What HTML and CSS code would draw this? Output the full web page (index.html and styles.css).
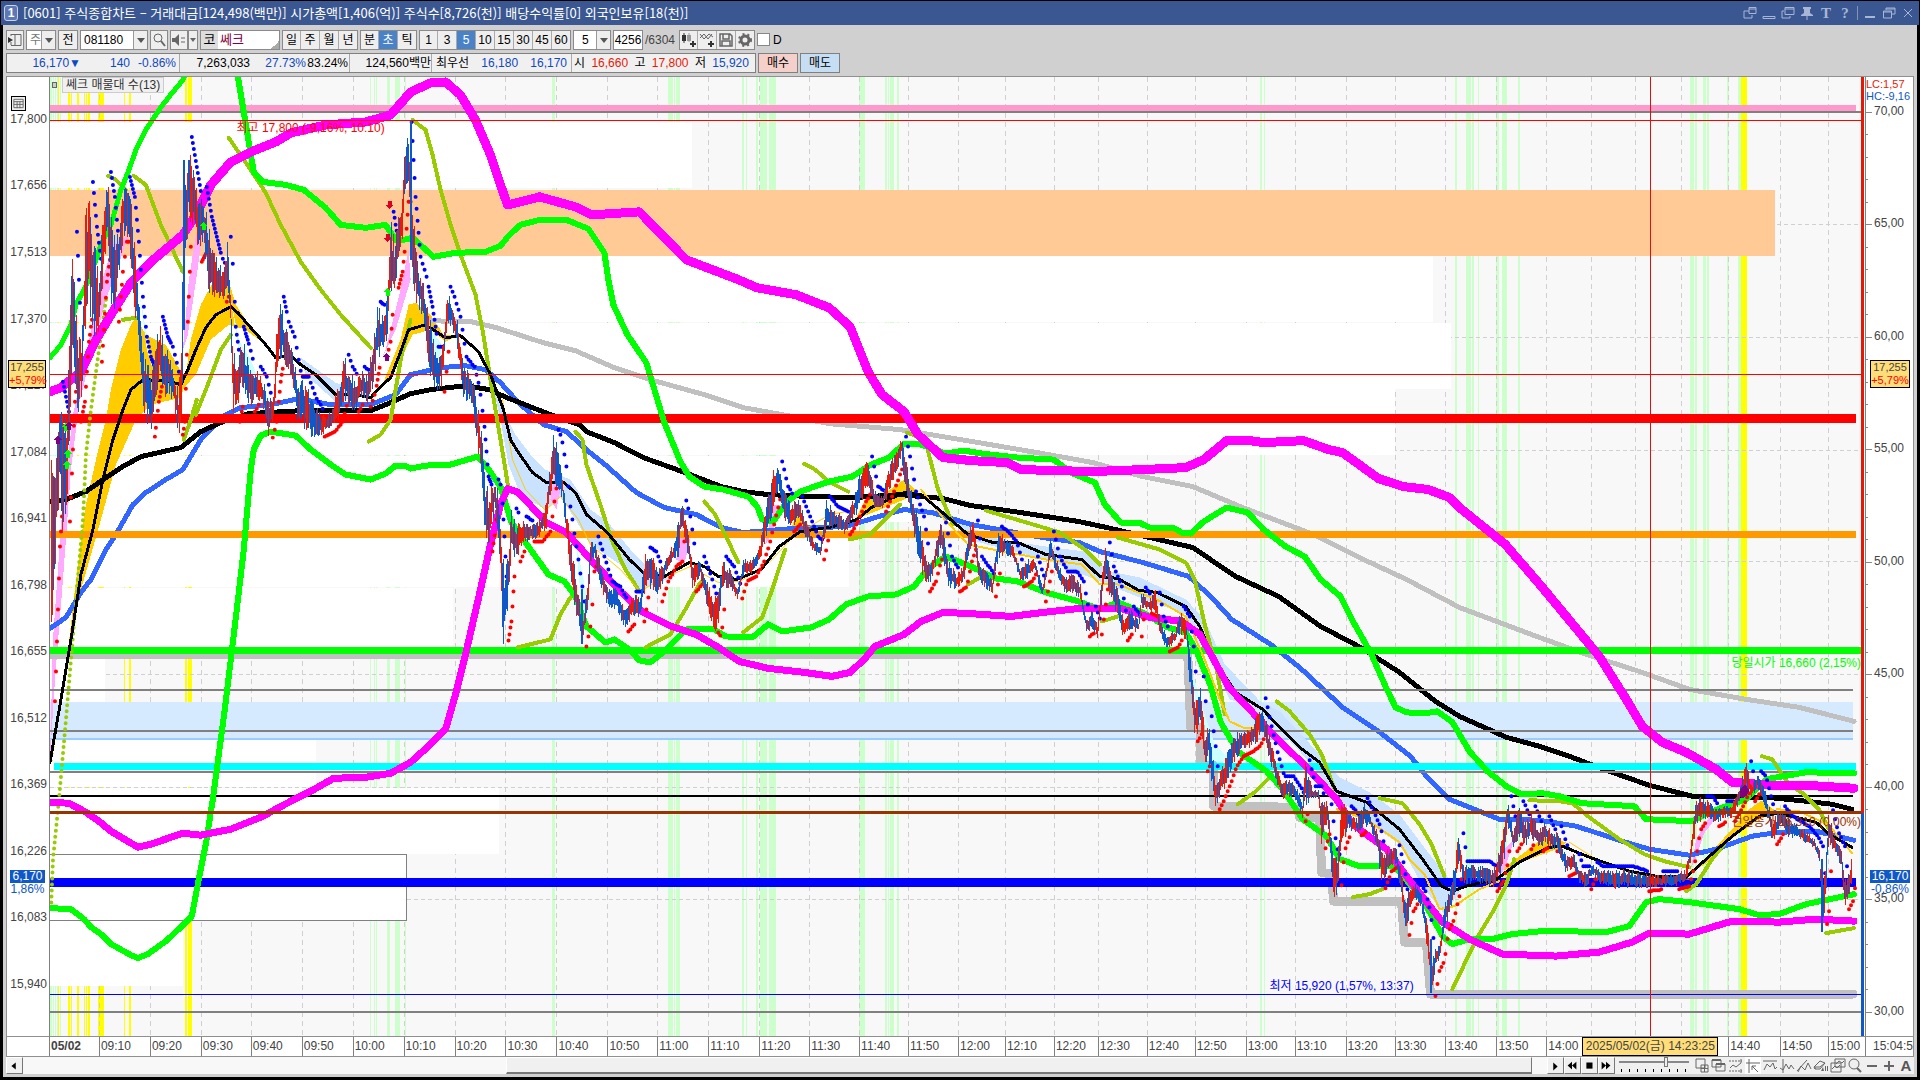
FILE: index.html
```html
<!DOCTYPE html>
<html lang="ko">
<head>
<meta charset="utf-8">
<title>[0601] 주식종합차트</title>
<link rel="stylesheet" href="styles.css">
</head>
<body>
<header class="titlebar">
  <span class="badge">1</span>
  <h1>[0601] 주식종합차트 – 거래대금[124,498(백만)] 시가총액[1,406(억)] 주식수[8,726(천)] 배당수익률[0] 외국인보유[18(천)]</h1>
  <nav class="wincontrols">
    <button aria-label="분리"><svg viewBox="0 0 14 14"><path d="M6 5H1v7h8V9M6 1.500h7v6H6zM6 3h7"/></svg></button>
    <button aria-label="내리기"><svg viewBox="0 0 14 14"><path d="M1 10.500h12v2H1z"/></svg></button>
    <button aria-label="복제"><svg viewBox="0 0 14 14"><path d="M4 1.500h9v7H4zM4 3h9M1 5v7h8M1 5h2M9 12v-2"/></svg></button>
    <button aria-label="고정"><svg viewBox="0 0 14 14"><path class="solid" d="M3 1h8v2h-1v4l3 2v1H1V9l3-2V3H3z"/><path d="M7 10v4"/></svg></button>
    <button class="letter" aria-label="글꼴">T</button>
    <button class="letter" aria-label="도움말">?</button>
    <i></i>
    <button aria-label="최소화"><svg viewBox="0 0 14 14"><path class="solid" d="M2 10h10v2H2z"/></svg></button>
    <button aria-label="이전 크기"><svg viewBox="0 0 14 14"><path d="M4 4V2h9v6h-3M4 3h9M1.500 5h8v7h-8zM1.500 6h8"/></svg></button>
    <button aria-label="닫기"><svg viewBox="0 0 14 14"><path d="M3 3l8 8M11 3l-8 8"/></svg></button>
  </nav>
</header>
<main class="window">
  <form class="toolbar">
    <button type="button" class="cell" aria-label="패널"><svg viewBox="0 0 16 16"><path d="M4 2.500h10v11H4M8 3v10M4 13V10M4 2v2"/><path class="dark" d="M1 5l5 3-5 3z"/></svg></button>
    <label class="drop w30"><select aria-label="종류"><option>주</option></select></label>
    <button type="button" class="cell w20">전</button>
    <label class="drop w68"><input aria-label="종목코드" value="081180"></label>
    <button type="button" class="cell" aria-label="검색"><svg viewBox="0 0 16 16"><circle cx="7" cy="6" r="4"/><path d="M10 9l4 5" stroke-width="2"/></svg></button>
    <button type="button" class="cell" aria-label="소리"><svg viewBox="0 0 16 16"><path class="fill" d="M1 6h3l4-4v12L4 10H1z"/><path d="M11 5v2M11 9v2M13 5v2M13 9v2"/></svg></button>
    <button type="button" class="cell w10" aria-label="소리 목록"><svg viewBox="0 0 8 16"><path class="fill" d="M1 6h6L4 10z"/></svg></button>
    <div class="stock"><b>코</b><span>쎄크</span></div>
    <div class="group">
      <button type="button">일</button><button type="button">주</button><button type="button">월</button><button type="button">년</button>
    </div>
    <div class="group">
      <button type="button">분</button><button type="button" class="on">초</button><button type="button">틱</button>
    </div>
    <div class="group">
      <button type="button">1</button><button type="button">3</button><button type="button" class="on">5</button><button type="button">10</button><button type="button">15</button><button type="button">30</button><button type="button">45</button><button type="button">60</button>
    </div>
    <label class="drop w38"><select aria-label="주기"><option>5</option></select></label>
    <input class="count" aria-label="표시 개수" value="4256"><span class="total">/6304</span>
    <div class="group tools">
      <button type="button" aria-label="봉 추가"><svg viewBox="0 0 16 16"><path class="dark" d="M1 3h4v6H1zM2.500 1h1v10h-1z"/><path class="soft" d="M6 3h4v6H6zM7.500 1h1v9h-1z"/><path class="dark" d="M11 9h2v2h2v2h-2v2h-2v-2H9v-2h2z"/></svg></button>
      <button type="button" aria-label="지표 추가"><svg viewBox="0 0 16 16"><path d="M1 6l4-4 4 5 4-5M1 2l4 5 5-5 4 3"/><path class="dark" d="M11 9h2v2h2v2h-2v2h-2v-2H9v-2h2z"/></svg></button>
      <button type="button" aria-label="저장"><svg viewBox="0 0 16 16"><path d="M2 2h10l2 2v10H2zM5 2v5h6V2M4 14V9h8v5" stroke-width="1.500"/></svg></button>
      <button type="button" aria-label="설정"><svg viewBox="0 0 16 16"><circle cx="8" cy="8" r="4" stroke-width="3"/><circle cx="8" cy="8" r="6" stroke-dasharray="2 3" stroke-width="2"/></svg></button>
    </div>
    <label class="check"><input type="checkbox">D</label>
  </form>
  <section class="quote">
    <dl>
      <div class="q1"><span class="down a">16,170▼</span><span class="down b">140</span><span class="down c">-0.86%</span></div>
      <div class="q2"><span class="d">7,263,033</span><span class="down e">27.73%</span><span class="f">83.24%</span></div>
      <div class="q3">124,560백만</div>
      <div class="q4"><span>최우선</span><span class="down">16,180</span><span class="down">16,170</span></div>
      <div class="q5"><span>시</span><span class="up">16,660</span><span>고</span><span class="up">17,800</span><span>저</span><span class="down">15,920</span></div>
    </dl>
    <button class="buy">매수</button>
    <button class="sell">매도</button>
  </section>
  <section class="chart">
    <div class="axis left" id="left">
      <button class="grid-btn" aria-label="표"><svg viewBox="0 0 14 14"><path d="M2 2.500h10v9H2zM2 5h10M2 8h10M5.500 5v7M8.500 5v7"/></svg></button>
    </div>
    <div class="plot">
      <svg id="canvas" viewBox="49 77 1813 960" preserveAspectRatio="none" role="img" aria-label="쎄크 5초 차트"></svg>
      <div class="legend"><i></i><span>쎄크 매물대 수(13)</span></div>
      <span class="note high">최고 17,800 (-9,16%, 10:10)</span>
      <span class="note low">최저 15,920 (1,57%, 13:37)</span>
      <span class="note open">당일시가 16,660 (2,15%)</span>
      <span class="note prev">전일종가 16,310 (0,00%)</span>
    </div>
    <div class="range"></div>
    <div class="axis right" id="right">
      <span class="lc">LC:1,57</span><span class="hc">HC:-9,16</span>
    </div>
    <div class="corner"></div>
    <div class="times" id="times"></div>
    <div class="last">15:04:5</div>
  </section>
  <footer class="bottom">
    <button class="step" aria-label="왼쪽"><svg viewBox="0 0 16 16"><path class="ink" d="M10 4v8L5 8z"/></svg></button>
    <div class="track"><div class="thumb"></div></div>
    <div class="player">
      <button aria-label="재생"><svg viewBox="0 0 16 16"><path class="ink" d="M6 4v9l5-4.500z"/></svg></button>
      <button aria-label="뒤로"><svg viewBox="0 0 16 16"><path class="ink" d="M8 3v9L3 7.500zM13 3v9L8 7.500z"/></svg></button>
      <button aria-label="정지"><svg viewBox="0 0 16 16"><path class="ink" d="M5 4h7v7H5z"/></svg></button>
      <button aria-label="앞으로"><svg viewBox="0 0 16 16"><path class="ink" d="M3 3v9l5-4.500zM8 3v9l5-4.500z"/></svg></button>
    </div>
    <input class="speed" type="range" min="0" max="8" value="5.500" step="0.500" aria-label="속도">
    <div class="drawtools">
      <button aria-label="창 추가"><svg viewBox="0 0 16 16"><path d="M2 1h9v9H2zM7 7h7v7H7zM10.500 7v7M7 10.500h7"/></svg></button>
      <button aria-label="창 겹침"><svg viewBox="0 0 16 16"><path d="M1 2h9v7H1zM5 6h9v7H5z"/><path class="fill" d="M1 1h9v2H1zM5 5h9v2H5z"/></svg></button>
      <button aria-label="구간"><svg viewBox="0 0 16 16"><path d="M1 3h13M1 13h13" stroke-dasharray="2 1"/><path d="M2 10l3-3 3 2 5-4M13 1v4M13 11v4"/></svg></button>
      <button class="on" aria-label="십자선"><svg viewBox="0 0 16 16"><path d="M4 1v14M1 5h14M7 8l6 6M7 8h4M7 8v4"/></svg></button>
      <button aria-label="수평선"><svg viewBox="0 0 16 16"><path d="M1 3h14M2 12l3-6 3 3 3-4 2 6 2-2"/></svg></button>
      <button aria-label="수직선"><svg viewBox="0 0 16 16"><path d="M4 1v14M1 10l3 2 3-6 3 5 2-4 3 4"/></svg></button>
      <button aria-label="추세선"><svg viewBox="0 0 16 16"><path d="M1 13L11 2M2 14l3-6 4 4 3-7 3 6"/></svg></button>
      <button aria-label="모두 지우기"><svg viewBox="0 0 16 16"><path d="M1 9l6-6 5 2-5 6H2zM2 11V9h5l5-4"/><path class="fill" d="M8 13l2-4 1 4zM12 8h1v5h-1zM14 8h1v5h-1z"/></svg></button>
      <button aria-label="비교"><svg viewBox="0 0 16 16"><path d="M5 1h10v8H5zM1 5h10v9H1zM6 6l3-3 3 2 2-2M2 11l3-3 2 2 3-3"/></svg></button>
      <button aria-label="돋보기"><svg viewBox="0 0 16 16"><circle cx="7" cy="6" r="5"/><path d="M10 10l4 4" stroke-width="2"/></svg></button>
      <button aria-label="축소"><svg viewBox="0 0 16 16"><path d="M3 8h10" stroke-width="2"/></svg></button>
      <button aria-label="확대"><svg viewBox="0 0 16 16"><path d="M3 8h10M8 3v10" stroke-width="2"/></svg></button>
      <button class="auto" aria-label="자동">A</button>
    </div>
  </footer>
</main>
<script src="chart.js"></script>
</body>
</html>
```
FILE: styles.css
```css
* { box-sizing: border-box; }
body {
  margin: 0;
  padding: 1px 1px 3px;
  height: 100vh;
  display: flex;
  flex-direction: column;
  background: #000;
  color: #000;
  font: 12px/16px "Liberation Sans", "Noto Sans CJK KR", sans-serif;
  overflow: hidden;
}
button, input, select { font: inherit; color: inherit; margin: 0; padding: 0; border: 0; border-radius: 0; background: none; }
svg { fill: none; stroke: #666; }
.titlebar { flex: none; display: flex; align-items: center; height: 24px; padding: 0 4px 0 3px; background: #3a5792; color: #fff; }
.badge { width: 14px; height: 16px; border: 1px solid #c8d2ea; border-radius: 3px; background: #5d78b5; font-weight: bold; line-height: 14px; text-align: center; }
h1 { flex: 1; margin: 0 0 0 5px; font: 13px/20px "Noto Sans CJK KR", sans-serif; white-space: nowrap; }
.wincontrols { display: flex; align-items: center; gap: 5px; }
.wincontrols button { width: 14px; height: 14px; line-height: 14px; }
.wincontrols svg { display: block; width: 14px; height: 14px; stroke: #a9b6d6; }
.wincontrols .solid { fill: #a9b6d6; stroke: none; }
.wincontrols .letter { font: bold 15px/14px "Liberation Serif", serif; color: #a9b6d6; }
.wincontrols i { width: 1px; height: 14px; background: #8592b4; }
.window { flex: 1; min-height: 0; display: flex; flex-direction: column; margin: 0 2px; padding: 0 3px 3px; background: #d0d0d0; }
.toolbar { flex: none; display: flex; gap: 2px; height: 25px; padding-top: 5px; margin: 0; }
.toolbar > * { flex: none; }
.toolbar svg { display: block; width: 16px; height: 16px; margin: auto; }
.dark { fill: #333; stroke: none; }
.fill { fill: #666; stroke: none; }
.soft { fill: #999; stroke: none; }
.ink { fill: #000; stroke: none; }
.cell { width: 18px; height: 20px; border: 1px solid #8a8a8a; background: #eee; }
.w20 { width: 20px; }
.w10 { width: 10px; margin-left: -2px; }
.toolbar .w10 svg { width: 8px; }
.drop { position: relative; height: 20px; border: 1px solid #8a8a8a; background: #fff; }
.drop select, .drop input { width: 100%; height: 18px; padding-left: 3px; appearance: none; }
.drop::after { content: ""; position: absolute; top: 0; right: 0; width: 13px; height: 18px; border-left: 1px solid #999; background: #eee; pointer-events: none; }
.drop::before { content: ""; position: absolute; z-index: 1; top: 7px; right: 2px; border: 4px solid transparent; border-top: 5px solid #555; border-bottom: 0; pointer-events: none; }
.w30 { width: 30px; }
.w30 select { color: #777; }
.w68 { width: 68px; }
.w38 { width: 38px; }
.w38 select { padding-left: 8px; }
.stock { display: flex; width: 80px; height: 20px; border: 1px solid #8a8a8a; background: linear-gradient(135deg, transparent 50%, #aaa 50%) right bottom / 8px 8px no-repeat #fff; font-size: 13px; line-height: 18px; color: #800040; }
.stock b { width: 17px; margin-right: 2px; background: #ddd; color: #000; font-weight: normal; text-align: center; }
.group { display: flex; height: 20px; border: 1px solid #8a8a8a; background: #eee; }
.group button { width: 19px; border-right: 1px solid #aaa; line-height: 18px; }
.group button:first-child, .group button:last-child { width: 18px; }
.group button:last-child { border-right: 0; }
.group .on { background: #4a82c8; color: #fff; }
.count { width: 30px; height: 20px; border: 1px solid #8a8a8a; background: #fff; text-align: center; }
.total { width: 32px; line-height: 20px; color: #444; }
.check { display: flex; align-items: center; gap: 3px; height: 19px; }
.check input { width: 13px; height: 13px; appearance: none; border: 1px solid #888; background: #fff; }
.quote { flex: none; display: flex; gap: 2px; height: 26px; padding: 3px 0; }
.quote dl { display: flex; width: 750px; margin: 0; border: 1px solid #808080; background: #f0f0f0; line-height: 18px; white-space: nowrap; }
.quote dl > div { flex: none; display: flex; border-right: 1px solid #aaa; }
.quote .q1 { width: 173px; }
.q1 span, .q2 span { text-align: right; }
.a { width: 74px; }
.b { width: 49px; }
.c { width: 46px; }
.quote .q2 { width: 170px; }
.d { width: 70px; }
.e { width: 56px; }
.f { width: 42px; }
.quote .q3 { width: 82px; justify-content: flex-end; }
.quote .q4 { width: 140px; justify-content: space-between; padding: 0 4px; }
.quote .q5 { flex: 1; border: 0; justify-content: space-between; padding: 0 6px 0 2px; }
.down { color: #1048c0; }
.up { color: #e81808; }
.buy, .sell { width: 40px; border: 1px solid #808080; background: #f5d0ca; }
.sell { background: #c6def4; }
.chart { flex: 1; min-height: 0; display: grid; grid-template-columns: 43px minmax(0, 1fr) 4px 48px; grid-template-rows: minmax(0, 1fr) 20px; border: 1px solid #909090; background: #fff; color: #444; }
.axis { position: relative; overflow: hidden; }
.axis.left { border-right: 1px solid #808080; }
.axis.right { border-left: 1px solid #808080; }
.tick { position: absolute; transform: translateY(-50%); }
.left .tick { right: 2px; }
.right .tick { left: 0; padding-left: 8px; }
.right .tick::before { content: ""; position: absolute; left: 0; top: 9px; width: 6px; height: 1px; background: #888; }
.minor { position: absolute; left: 0; width: 2px; height: 1px; background: #888; }
.cursor { position: absolute; z-index: 1; left: 1px; width: 38px; height: 28px; border: 1px solid #000; background: #ffdd78; font-size: 11px; line-height: 13px; text-align: center; white-space: nowrap; }
.cursor b { display: block; color: #f00; font-weight: normal; }
.right .cursor { left: 4px; width: 40px; }
.now { position: absolute; z-index: 1; left: 3px; width: 35px; color: #1058c8; line-height: 12px; text-align: center; white-space: nowrap; }
.now b { display: block; background: #1058c8; color: #fff; font-weight: normal; line-height: 13px; }
.right .now { left: 4px; width: 40px; }
.lc, .hc { position: absolute; left: 0; top: 1px; color: #e81808; font-size: 11px; line-height: 12px; }
.hc { top: 13px; color: #1058c8; }
.grid-btn { position: absolute; left: 4px; top: 19px; width: 15px; height: 15px; border: 1px solid #000; background: #eee; }
.grid-btn svg { display: block; width: 13px; height: 13px; }
.plot { position: relative; min-width: 0; min-height: 0; background: #f8f8f8; }
.plot > svg { display: block; width: 100%; height: 100%; shape-rendering: crispEdges; }
.legend { position: absolute; left: 2px; top: 0; display: flex; align-items: center; gap: 5px; color: #333; }
.legend i { width: 5px; height: 6px; border: 1px solid #666; background: #ccc; }
.legend span { padding: 0 3px; border: 1px solid #ccc; background: #f0f0f0; line-height: 14px; }
.note { position: absolute; white-space: nowrap; }
.high { left: 10.3%; top: 4.5%; color: #f00; }
.low { right: 24.7%; top: 94%; color: #00f; }
.open { right: 0; top: 60.3%; color: #0f0; }
.prev { right: 0; top: 76.8%; color: #993300; }
.range { background: linear-gradient(#e81808 76.7%, #1058c8 76.7%); width: 3px; }
.corner, .times, .last { border-top: 1px solid #909090; line-height: 18px; }
.corner { border-right: 1px solid #808080; }
.times { position: relative; overflow: hidden; grid-column: 2 / 4; }
.times span { position: absolute; top: 0; height: 19px; padding-left: 1px; border-left: 1px solid #808080; }
.times .date { border: 0; font-weight: bold; }
.times .at { z-index: 1; border: 1px solid #000; background: #ffdd78; padding: 0; line-height: 16px; width: 136px; text-align: center; white-space: nowrap; }
.last { border-left: 1px solid #808080; overflow: hidden; text-align: right; }
.bottom { flex: none; display: flex; height: 17px; background: #f0f0f0; }
.bottom svg { display: block; width: 16px; height: 16px; }
.step, .player button { width: 17px; border: 1px solid #fff; border-right-color: #777; border-bottom-color: #777; background: #f0f0f0; }
.bottom .step svg, .bottom .player svg { width: 14px; height: 14px; }
.track { flex: 1; display: flex; justify-content: flex-end; padding-right: 15px; background: #f8f8f8; }
.thumb { width: 68%; border: 1px solid #fff; border-right-color: #777; border-bottom: 2px solid #777; background: #f0f0f0; }
.player { display: flex; }
.speed { width: 70px; height: 16px; margin: 0 5px 0 4px; appearance: none; background: repeating-linear-gradient(90deg, #000 0 1px, transparent 1px 8px) 2px 12px / 100% 3px no-repeat, linear-gradient(#888, #888) 0 4px / 100% 2px no-repeat; }
.speed::-webkit-slider-thumb { appearance: none; width: 4px; height: 10px; margin-top: -6px; border: 1px solid #777; background: #eee; }
.drawtools { display: flex; gap: 1px; }
.drawtools button { width: 16px; }
.drawtools .on { background: #fff; }
.drawtools .auto { color: #555; font-weight: bold; font-size: 15px; }
```
FILE: chart.js
```js
const X0 = 49, Y0 = 77, W = 1813, H = 960;
const svg = document.getElementById('canvas');
const NS = 'http://www.w3.org/2000/svg';
function el(name, attrs) {
  const e = document.createElementNS(NS, name);
  for (const k in attrs) e.setAttribute(k, attrs[k]);
  svg.appendChild(e);
}
const rect = (x, y, w, h, fill) => el('rect', { x, y, width: w, height: h, fill, stroke: 'none' });
const line = (pts, stroke, w, extra) => el('polyline', Object.assign({ points: pts, stroke, 'stroke-width': w, 'stroke-linejoin': 'round', 'stroke-linecap': 'round' }, extra));
const area = (pts, fill) => el('polygon', { points: pts, fill, stroke: 'none' });

// signal stripes
[[49,2],[52,1],[54,1],[56,1],[59,1],[369,1],[373,1],[375,1],[386,3],[394,5],[404,1],[552,3],[668,5],[674,1],[676,4],[742,2],[746,1],[756,2],[760,7],[769,7],[859,6],[885,2],[888,1],[890,4],[897,2],[1260,2],[1264,1],[1456,2],[1467,5],[1473,2],[1479,1],[1497,3],[1503,5],[1519,2],[1691,4],[1696,2],[1704,3],[1708,2],[1728,2],[1739,3]]
  .forEach(([x, w]) => rect(x, 77, w, 960, '#ccffcc'));
[[57,1],[67,2],[70,1],[76,2],[83,1],[85,1],[87,2],[97,6],[123,1],[128,2],[184,2],[187,4],[1742,6]]
  .forEach(([x, w]) => rect(x, 77, w, 960, '#ffff00'));

// time and percent grid
const marks = [98,149,200,250,301,352,403,454,505,556,607,657,708,759,809,859,908,958,1005,1054,1098,1147,1195,1246,1295,1346,1395,1446,1497,1547,1592,1636,1682,1729,1781,1829];
marks.forEach(x => el('path', { d: `M${x}.5 77V1037`, stroke: '#d0d0d0', 'stroke-dasharray': '5 4' }));
[224,337,450,562,675,788,900].forEach(y => el('path', { d: `M49 ${y}.5H1862`, stroke: '#d0d0d0', 'stroke-dasharray': '4 3' }));

// volume profile
[[122,66,692],[256,66,1434],[323,66,1452],[389,66,1395],[456,66,911],[522,66,849],[589,66,452],[655,66,104],[722,66,315],[789,66,498],[921,66,182]]
  .forEach(([y, h, x]) => rect(49, y, x - 49, h, '#ffffff'));
rect(49, 190, 1727, 66, '#ffca96');
el('rect', { x: 48.5, y: 855.5, width: 357, height: 66, fill: '#fff', stroke: '#808080' });
rect(49, 703, 1805, 37, '#d6eaff');
rect(49, 739, 1805, 2, '#99ccff');

// clouds
['95,460 105,420 110,390 120,350 130,325 135,318 145,335 165,345 180,372 185,382 180,398 150,405 135,420 115,465 100,520 80,590 70,640 60,700 50,772 66,660 74,590 84,510',
 '183,388 190,340 200,305 212,283 228,281 235,305 245,320 265,345 245,330 228,325 210,340 195,375',
 '380,390 400,340 408,305 415,303 430,315 443,335 460,335 445,342 430,330 412,335 400,360',
 '855,520 865,500 880,497 890,490 904,480 918,492 904,500 885,508 870,514',
 '790,530 797,515 805,522 815,533',
 '1500,873 1520,857 1545,838 1567,843 1560,849 1530,860',
 '1691,875 1710,855 1733,830 1750,810 1763,801 1778,813 1760,820 1733,839 1710,862'].forEach(p => area(p, '#ffcc00'));
['492,385 500,400 507,420 515,435 530,455 545,470 570,480 580,495 590,510 607,522 630,550 650,570 675,577 640,590 620,565 590,545 575,520 560,497 545,510 520,495 508,465 500,420',
 '943,510 968,527 1000,540 1046,547 1085,552 1110,572 1140,578 1186,600 1205,620 1225,665 1257,698 1266,712 1230,700 1205,650 1186,615 1140,598 1100,582 1046,560 968,540',
 '1227,670 1247,695 1280,712 1320,755 1340,778 1370,793 1400,815 1430,855 1450,880 1465,885 1445,915 1425,890 1400,845 1360,818 1340,800 1310,763 1263,712 1230,700',
 '300,358 335,383 370,395 335,402 305,375'].forEach(p => area(p, '#c8e2ff'));
['230,300 238,340 250,360 262,390 272,405 268,425 255,390 240,365', '138,290 145,330 152,370 146,350', '485,440 490,470 497,500 493,500', '1190,660 1200,700 1215,745 1230,760 1215,775 1200,730', '575,540 585,590 592,600 583,625', '422,295 430,330 445,350 436,360 428,340'].forEach(p => area(p, '#ccffff'));
['49,760 52,640 62,500 72,415 85,355 100,285 112,245 128,235 105,300 90,355 78,405 70,470 62,580 54,680',
 '182,350 188,280 195,235 203,222 196,275 187,335', '385,350 400,290 408,250 410,280 395,330 375,372', '1692,868 1697,840 1710,818 1722,812 1705,834 1697,858', '550,500 555,470 562,480 556,510', '676,560 682,530 690,540 684,565', '765,545 773,505 780,505 772,535', '1497,880 1505,850 1515,840 1505,870'].forEach(p => area(p, '#ffaaff'));

// long averages
line('429,321 471,322 496,328 543,343 575,351 614,368 650,380 704,395 743,408 793,417 829,424 900,430 961,440 1043,454 1093,463 1143,477 1193,487 1243,508 1314,535 1364,560 1407,580 1460,608 1540,638 1590,656 1640,672 1690,690 1747,700 1800,708 1855,722', '#c0c0c0', 5);
line('49,655 1188,655 1191,728 1201,728 1201,766 1214,766 1214,807 1298,808 1300,818 1320,818 1322,873 1332,875 1334,902 1402,902 1405,943 1427,944 1431,995 1854,995', '#c0c0c0', 9);
line('49,629 65,618 80,593 90,580 105,550 115,535 132,505 145,493 165,480 182,470 200,440 225,415 240,408 270,405 298,399 330,405 370,405 395,395 410,375 440,368 465,366 485,370 500,383 518,403 543,425 566,432 586,450 607,467 636,493 664,508 696,515 721,528 743,533 793,529 846,527 875,518 904,510 932,513 971,525 1043,538 1079,543 1100,552 1143,563 1189,577 1211,597 1232,620 1271,645 1300,668 1343,708 1379,732 1411,757 1427,777 1450,800 1500,820 1540,821 1577,827 1623,842 1650,850 1690,856 1717,850 1753,837 1780,833 1817,832 1855,841', '#3366ff', 5);
line('49,502 65,500 85,492 105,478 120,468 140,457 180,448 200,432 222,422 248,414 300,411 370,411 385,405 410,394 430,390 465,386 489,390 504,397 550,415 579,425 586,432 614,443 643,458 682,472 721,487 743,492 768,495 811,497 854,498 900,495 943,499 971,506 1014,512 1079,522 1107,528 1150,538 1193,548 1236,577 1279,597 1321,627 1361,648 1400,673 1436,702 1460,717 1507,738 1540,747 1570,757 1607,771 1650,786 1693,797 1767,798 1807,802 1833,805 1853,810', '#000', 5);

// price levels
rect(49, 105, 1808, 6, '#ff99cc');
rect(49, 111, 1813, 2, '#808080');
rect(49, 414, 1808, 9, '#ff0000');
rect(49, 531, 1808, 7, '#ff9900');
rect(49, 648, 1813, 7, '#00ff00');
rect(49, 690, 1805, 2, '#808080');
rect(49, 731, 1805, 2, '#808080');
rect(53, 764, 1804, 7, '#00ffff');
rect(49, 772, 1805, 2, '#808080');
rect(49, 796, 1805, 2, '#000');
rect(49, 879, 1808, 9, '#0000ff');
rect(49, 1012, 1813, 2, '#808080');

// stops
['107,176 115,180 125,190', '133,176 145,185 160,225 182,272', '228,138 250,170 265,193 280,225 300,262 320,290 340,315 370,348',
 '412,120 425,130 432,155 440,190 450,225 460,255 475,295 482,330 490,380 500,440 505,470 508,490', '195,415 205,390 220,350 230,335', '183,440 190,420 196,400', '122,320 135,318',
 '368,442 380,435 390,420 400,360 410,320', '575,432 582,440 586,465 600,505 611,540 625,570 638,590', '704,502 715,515 725,535 738,563', '804,464 815,470 830,483 848,492',
 '517,648 550,640 560,615 570,598', '645,648 670,635 685,610 700,583', '743,633 762,618 772,590 785,550', '850,540 870,535 890,515 900,505', '907,433 925,440 938,490 953,525',
 '986,511 1030,524 1060,533 1085,550 1100,565', '1118,538 1160,550 1186,563 1195,580 1205,625 1217,670 1225,715', '968,585 982,577', '1102,622 1118,617', '1277,702 1290,712 1310,735 1322,755 1335,790',
 '1238,805 1255,793 1268,780', '1380,799 1403,804 1420,825 1432,845 1445,877', '1353,898 1370,895 1383,890', '1453,990 1465,965 1480,935 1495,910 1507,885 1515,860',
 '1530,801 1560,802 1573,804 1590,818 1620,840 1645,855 1665,862 1690,868', '1687,892 1697,885 1713,860 1725,845', '1763,757 1773,760 1790,785 1805,795 1820,810 1830,830', '1827,934 1855,929']
  .forEach(p => line(p, '#99cc00', 4));
line('105,300 98,350 90,410 85,455 82,520 75,600 70,660 65,720 58,800 52,860 50,910', '#99cc00', 4, { 'stroke-dasharray': '0 6', 'shape-rendering': 'auto' });

// inner bands
line('49,358 60,345 70,325 75,305 88,280 100,245 110,225 120,190 128,170 135,150 145,130 158,110 168,97 182,80 186,70', '#00ff00', 5);
line('236,70 241,100 246,130 250,155 253,172 262,182 285,185 303,190 325,208 340,225 365,228 385,225 395,240 403,240 412,238 433,257 455,253 485,252 500,246 508,236 520,225 539,220 566,220 588,229 604,253 608,280 613,305 627,335 646,363 655,393 664,423 680,462 689,477 704,487 723,490 748,497 757,507 762,520 773,522 786,503 800,492 829,482 852,477 871,465 889,458 904,444 918,444 946,454 964,451 982,454 1018,458 1054,460 1071,473 1095,483 1105,505 1121,523 1139,523 1150,528 1173,528 1182,533 1191,534 1204,522 1227,508 1248,513 1264,530 1286,547 1305,557 1321,580 1341,597 1354,623 1371,653 1386,687 1396,708 1407,713 1425,714 1438,712 1453,723 1470,752 1488,772 1507,787 1522,795 1543,794 1560,797 1583,804 1635,807 1647,820 1693,822 1713,812 1747,800 1767,780 1807,773 1855,774', '#00ff00', 6);
line('49,909 70,910 83,920 90,928 100,935 110,945 130,956 137,959 147,955 165,942 180,928 191,917 197,885 205,845 212,800 218,755 224,710 230,660 236,610 243,550 250,470 253,450 260,436 270,432 295,436 310,450 330,465 345,475 370,480 385,474 395,466 404,466 410,469 425,466 450,465 477,457 486,467 500,487 511,523 525,543 548,575 564,582 575,597 586,627 605,643 614,640 629,650 639,661 650,663 664,652 686,630 714,630 725,637 752,638 768,625 782,632 811,628 829,620 846,605 868,597 896,595 914,587 929,568 946,557 971,567 996,579 1018,582 1046,593 1079,602 1100,610 1118,603 1143,613 1168,628 1186,633 1196,650 1211,687 1221,723 1238,752 1267,772 1283,790 1303,820 1327,837 1340,860 1360,867 1395,867 1413,888 1427,907 1443,937 1453,945 1470,940 1493,940 1513,935 1543,932 1560,932 1607,933 1630,927 1647,903 1660,900 1690,903 1740,910 1760,916 1780,915 1807,905 1855,895', '#00ff00', 6);

// middle average and its lag
line('502,400 512,460 525,490 545,511 560,497 578,520 590,545 620,570 640,592 660,580 690,567 718,583 740,582 770,562 795,535 830,515 857,510', '#ffcc00', 1);
line('921,490 943,518 968,545 993,550 1046,560 1082,565 1100,585 1118,585 1157,600 1186,617 1205,660 1220,700 1230,722 1245,729 1262,728', '#ffcc00', 2);
line('1337,810 1367,820 1400,843 1410,860 1425,875 1440,910 1455,907 1480,890 1500,882', '#ffcc00', 2);
line('1570,843 1600,862 1640,876 1690,880', '#ffcc00', 1);
line('1778,810 1800,812 1830,826 1853,854', '#ffcc00', 2);
line('49,763 60,700 70,640 80,575 92,530 102,480 112,440 122,410 130,390 142,380 165,381 180,385 187,370 195,350 205,328 215,315 230,307 237,313 250,328 265,345 275,358 290,356 300,365 315,375 335,395 355,395 370,398 380,387 390,378 400,352 408,330 425,325 445,338 460,336 478,352 490,375 503,410 510,440 518,453 532,473 546,483 562,482 575,493 586,515 607,533 629,560 643,573 664,577 689,563 704,567 718,577 736,580 761,570 779,547 800,532 829,528 857,520 871,508 904,493 921,495 939,510 968,535 993,543 1018,543 1046,555 1082,560 1100,577 1118,579 1139,591 1157,593 1186,607 1200,627 1214,660 1236,693 1263,710 1280,728 1300,748 1320,763 1337,792 1367,803 1400,830 1423,860 1442,887 1453,892 1467,887 1497,880 1520,863 1550,848 1563,847 1590,858 1630,872 1657,877 1687,878 1707,860 1733,837 1760,817 1780,814 1817,823 1830,835 1853,848', '#000', 3);

// outer bands
line('49,392 60,388 80,372 95,340 110,315 130,283 150,262 182,235 195,215 210,185 230,162 250,152 275,142 290,133 325,125 365,122 390,115 410,92 430,83 445,82 460,95 475,120 490,155 500,185 507,205 520,202 539,197 575,207 591,215 639,212 686,260 736,279 757,288 796,295 829,308 850,327 868,372 882,395 904,412 918,435 943,458 971,461 1007,463 1021,470 1093,472 1143,470 1186,468 1204,460 1227,441 1250,441 1264,443 1304,441 1329,450 1343,453 1379,479 1404,487 1429,490 1450,498 1460,508 1506,545 1543,588 1600,657 1627,700 1643,727 1663,743 1687,753 1717,770 1733,783 1773,786 1807,786 1855,789', '#ff00ff', 9);
line('49,803 68,804 85,813 98,822 110,832 137,848 150,845 182,834 200,836 230,830 260,818 290,802 310,792 333,779 365,778 390,774 410,763 430,745 445,730 455,695 465,655 480,590 490,545 500,505 507,489 518,493 546,523 566,533 593,563 621,593 643,613 671,627 696,635 718,648 739,662 768,669 804,673 832,677 850,673 864,660 875,647 904,635 921,622 943,613 968,614 1011,617 1043,613 1079,609 1121,609 1150,618 1182,622 1200,635 1214,660 1229,688 1250,710 1271,733 1307,768 1337,800 1353,825 1387,850 1413,885 1443,923 1470,940 1503,955 1557,957 1600,953 1633,943 1650,934 1690,935 1733,922 1780,923 1817,920 1855,922', '#ff00ff', 7);

// x, high, low of the traded range
const P = [50,460,700,52,455,640,55,430,545,58,385,500,61,400,540,65,420,520,70,260,400,72,235,380,76,330,420,80,340,400,84,215,340,88,185,310,92,230,340,97,270,360,102,200,280,106,175,250,110,200,310,114,245,320,118,220,270,122,190,240,125,180,240,130,200,270,134,245,320,138,300,360,142,340,420,146,360,430,150,370,435,154,330,400,158,320,380,163,340,400,168,350,395,173,370,410,177,390,440,180,340,420,183,160,320,187,140,220,192,170,230,197,200,260,202,190,250,207,220,290,212,240,310,217,260,300,222,270,300,226,240,290,229,280,330,231,330,410,235,360,420,239,330,400,245,350,400,250,370,410,256,370,400,262,380,410,267,400,440,272,390,420,276,310,380,279,300,360,284,325,365,290,340,380,297,380,430,304,380,430,311,400,440,320,415,435,330,410,430,338,380,420,343,355,400,348,370,410,354,380,410,360,370,400,366,375,405,371,340,390,376,305,360,382,310,355,386,290,340,389,215,300,393,240,290,398,210,270,401,190,240,404,140,200,407,125,200,411,200,280,416,260,310,422,280,320,428,310,380,434,350,390,440,350,390,446,290,330,450,300,330,456,320,350,462,360,400,470,370,405,475,390,440,480,430,480,484,480,540,488,490,550,493,480,510,497,490,540,500,540,600,503,600,645,507,550,620,511,510,560,516,520,560,522,520,545,530,525,540,538,520,540,546,500,530,550,460,500,553,430,480,557,440,490,562,470,500,566,510,540,572,550,600,578,590,630,582,620,645,587,580,620,590,540,570,594,540,560,600,560,590,608,585,610,616,590,610,624,605,630,632,595,620,640,595,620,645,550,590,652,555,590,658,570,600,664,560,580,672,545,565,678,520,560,681,500,530,686,520,550,692,560,590,700,560,580,707,580,610,713,600,630,717,590,635,722,560,590,730,570,590,737,590,600,743,560,580,752,560,575,760,540,560,766,500,540,773,470,510,778,465,490,784,490,520,790,500,530,798,500,520,806,520,540,814,540,555,820,545,558,826,500,530,834,510,530,845,515,535,854,495,520,862,460,500,868,460,490,874,490,510,882,495,510,890,460,490,897,450,470,901,435,460,906,460,500,912,495,530,920,520,570,926,560,590,932,560,580,937,530,560,941,520,550,948,560,590,956,575,590,963,565,585,968,530,560,973,515,545,978,560,580,985,570,590,992,580,595,998,530,560,1004,535,555,1013,545,560,1020,570,585,1028,560,580,1034,560,570,1042,585,600,1047,560,575,1050,535,560,1056,560,575,1064,575,595,1073,575,595,1080,585,600,1086,620,635,1092,610,630,1097,625,640,1101,580,610,1105,540,580,1110,570,600,1118,590,620,1123,620,640,1130,610,630,1138,620,635,1141,590,610,1148,600,612,1155,590,615,1160,620,640,1166,635,650,1175,630,645,1180,610,635,1186,620,645,1190,650,700,1194,700,740,1200,680,730,1204,730,770,1208,720,760,1212,750,790,1215,780,810,1220,770,800,1228,750,780,1233,735,765,1240,730,755,1250,730,750,1256,715,745,1262,702,735,1268,730,760,1275,760,780,1281,780,800,1290,780,800,1297,790,805,1302,800,820,1305,760,810,1312,790,800,1318,790,800,1321,800,850,1327,800,830,1333,850,900,1337,860,895,1341,800,850,1348,810,830,1357,820,835,1363,800,830,1370,815,830,1377,830,850,1381,850,890,1388,850,870,1395,845,865,1401,870,895,1405,900,940,1410,890,910,1416,885,900,1422,895,910,1427,915,945,1432,960,995,1436,950,970,1441,940,960,1445,905,930,1450,890,920,1456,860,895,1459,830,870,1464,865,885,1470,865,885,1478,865,885,1486,865,885,1494,870,890,1500,850,880,1505,820,860,1508,800,830,1514,830,850,1520,805,840,1527,820,850,1532,810,840,1540,830,850,1546,820,845,1553,835,850,1558,830,850,1566,855,875,1575,855,870,1580,870,885,1587,870,890,1593,865,875,1600,870,885,1615,870,890,1630,870,890,1645,875,890,1660,875,888,1675,875,888,1686,870,885,1690,850,870,1694,820,850,1697,795,830,1703,800,820,1709,800,820,1716,810,825,1724,805,820,1732,805,820,1740,790,805,1747,760,790,1752,785,800,1758,775,790,1763,780,800,1768,800,820,1773,820,845,1782,810,830,1790,820,840,1798,825,840,1806,830,845,1815,840,850,1820,850,865,1823,890,930,1826,860,910,1829,810,850,1835,835,855,1842,850,870,1845,880,910,1850,870,900,1853,850,880];
let seed = 7;
const rnd = () => (seed = (seed * 16807) % 2147483647) / 2147483647;
const d = { up: '', down: '', top: '', low: '' };
for (let i = 0; i + 5 < P.length; i += 3) {
  const [xa, ha, la, xb, hb, lb] = P.slice(i, i + 6);
  const rise = hb + lb < ha + la;
  for (let x = xa; x < xb; x++) {
    const t = (x - xa) / (xb - xa);
    const h = ha + (hb - ha) * t, l = la + (lb - la) * t, s = l - h;
    const a = h + rnd() * s * 0.35, b = l - rnd() * s * 0.35;
    d[rnd() < (rise ? 0.6 : 0.4) ? 'up' : 'down'] += `M${x}.5 ${Math.round(a)}V${Math.round(b)}`;
    if (x % 2 === 0 || s > 50) {
      if (rise) d.low += `M${x + 4} ${Math.round(l + 2)}h0`;
      else d.top += `M${x + 4} ${Math.round(h - 3)}h0`;
    }
  }
}
const stroke = (path, color, w) => el('path', { d: path, stroke: color, 'stroke-width': w, 'stroke-linecap': w > 2 ? 'round' : 'butt', 'shape-rendering': w > 2 ? 'auto' : 'crispEdges' });
stroke(d.top, '#0000ff', 4);
stroke(d.low, '#ff0000', 4);
stroke(d.up, '#e81c0c', 1);
stroke(d.down, '#1058c8', 1);
stroke('M410 120V260M183 160V330M503 560V645M582 590V645M1823 860V933M1432 940V994', '#1058c8', 2);

// trade markers
[[389,205,'#dd0022'],[387,238,'#dd0022']].forEach(([x, y, c]) => area(`${x-2},${y-4} ${x+2},${y-4} ${x+2},${y} ${x+4},${y} ${x},${y+4} ${x-4},${y} ${x-2},${y}`, c));
[[387,292,'#00ff00'],[203,226,'#00ff00'],[65,427,'#00ff00'],[67,454,'#00ff00'],[66,465,'#00ff00'],[386,357,'#800080'],[68,426,'#800080'],[57,440,'#800080']].forEach(([x, y, c]) => area(`${x-2},${y+4} ${x+2},${y+4} ${x+2},${y} ${x+4},${y} ${x},${y-4} ${x-4},${y} ${x-2},${y}`, c));
area('1741,798 1741,790 1746,785 1750,791 1748,796 1744,799', '#800080');

// reference prices and crosshair
rect(49, 812, 1813, 3, '#993300');
rect(49, 120, 1813, 1, '#ff0000');
rect(49, 995, 1813, 1, '#0000ff');
rect(49, 374, 1813, 1, '#ff0000');
rect(1651, 77, 1, 960, '#e01010');

// axes
const add = (id, cls, html, key, pct) => {
  const e = document.createElement('span');
  e.className = cls;
  e.innerHTML = html;
  e.style[key] = pct + '%';
  document.getElementById(id).appendChild(e);
};
const pctY = y => (y - Y0) / H * 100;
['17,800','17,656','17,513','17,370','17,227','17,084','16,941','16,798','16,655','16,512','16,369','16,226','16,083','15,940']
  .forEach((t, i) => add('left', 'tick', t, 'top', pctY(119 + i * 66.6)));
for (let i = 0; i < 9; i++) {
  add('right', 'tick', (70 - i * 5) + ',00', 'top', pctY(111 + i * 112.6));
  for (let k = 1; k < 5 && i < 8; k++) add('right', 'minor', '', 'top', pctY(112 + i * 112.6 + k * 22.5));
}
add('left', 'cursor', '17,255<b>+5,79%</b>', 'top', pctY(360));
add('right', 'cursor', '17,255<b>+5,79%</b>', 'top', pctY(360));
add('left', 'now', '<b>6,170</b>1,86%', 'top', pctY(871));
add('right', 'now', '<b>16,170</b>-0,86%', 'top', pctY(871));
const pctX = x => (x - X0) / (W + 4) * 100;
add('times', 'date', '05/02', 'left', 0);
marks.forEach((x, i) => {
  const m = 550 + i * 10;
  if (x !== 1592 && x !== 1636 && x !== 1682) add('times', '', String(Math.floor(m / 60)).padStart(2, '0') + ':' + String(m % 60).padStart(2, '0'), 'left', pctX(x));
});
add('times', 'at', '2025/05/02(금) 14:23:25', 'left', pctX(1583));
```
